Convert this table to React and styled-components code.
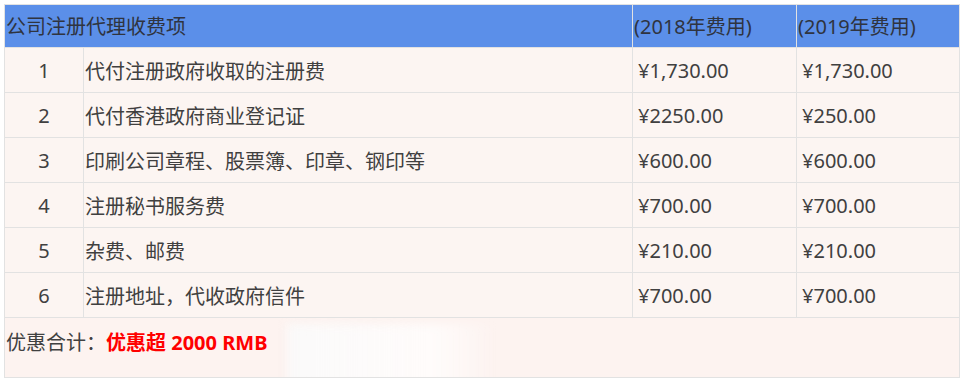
import React from 'react';
import styled, { createGlobalStyle } from 'styled-components';

const fees = [
  { no: 1, item: '代付注册政府收取的注册费', y2018: '1,730.00', y2019: '1,730.00' },
  { no: 2, item: '代付香港政府商业登记证', y2018: '2250.00', y2019: '250.00' },
  { no: 3, item: '印刷公司章程、股票簿、印章、钢印等', y2018: '600.00', y2019: '600.00' },
  { no: 4, item: '注册秘书服务费', y2018: '700.00', y2019: '700.00' },
  { no: 5, item: '杂费、邮费', y2018: '210.00', y2019: '210.00' },
  { no: 6, item: '注册地址，代收政府信件', y2018: '700.00', y2019: '700.00' },
];

const App = () => (
  <>
    <GlobalStyle />
    <Page>
      <FeeTable>
        <HeadCell span={2}>公司注册代理收费项</HeadCell>
        <HeadCell>(2018年费用)</HeadCell>
        <HeadCell>(2019年费用)</HeadCell>
        {fees.map((row) => (
          <React.Fragment key={row.no}>
            <Cell align="center">{row.no}</Cell>
            <Cell pad="1px">{row.item}</Cell>
            <Cell pad="5px">¥{row.y2018}</Cell>
            <Cell pad="5px">¥{row.y2019}</Cell>
          </React.Fragment>
        ))}
        <Footer>
          优惠合计：<Highlight>优惠超 2000 RMB</Highlight>
          <Smudge />
        </Footer>
      </FeeTable>
    </Page>
  </>
);

const GlobalStyle = createGlobalStyle`
  body {
    margin: 0;
    background: #ffffff;
    font-family: 'Noto Sans', 'Noto Sans CJK SC', sans-serif;
  }
`;

const Page = styled.div`
  padding: 4px 0 0 4px;
`;

const FeeTable = styled.div`
  display: grid;
  grid-template-columns: 79px 549px 164px 163px;
  grid-template-rows: 43px repeat(6, 45px) 60px;
  width: 956px;
  box-sizing: border-box;
  border-top: 1px solid #e2e2e2;
  border-left: 1px solid #e2e2e2;
`;

const BaseCell = styled.div`
  box-sizing: border-box;
  border-right: 1px solid #e2e2e2;
  border-bottom: 1px solid #e2e2e2;
  display: flex;
  align-items: center;
  font-size: 20px;
  white-space: nowrap;
`;

const HeadCell = styled(BaseCell)`
  grid-column: span ${(p) => p.span || 1};
  background: #5b8fe9;
  color: #2f3440;
  padding-left: 1px;
  padding-bottom: 1px;
`;

const Cell = styled(BaseCell)`
  background: #fcf5f2;
  color: #404040;
  justify-content: ${(p) => (p.align === 'center' ? 'center' : 'flex-start')};
  padding-left: ${(p) => p.pad || '0'};
`;

const Footer = styled(BaseCell)`
  grid-column: 1 / -1;
  position: relative;
  background: #fdf3f0;
  color: #404040;
  padding: 0 0 12px 1px;
  overflow: hidden;
`;

const Highlight = styled.span`
  color: #ff0000;
  font-weight: 700;
`;

const Smudge = styled.div`
  position: absolute;
  left: 282px;
  top: 6px;
  width: 210px;
  height: 64px;
  background: linear-gradient(90deg, rgba(250, 250, 250, 0.95), rgba(255, 255, 255, 0.7) 70%, rgba(255, 255, 255, 0));
  filter: blur(5px);
`;

export default App;
